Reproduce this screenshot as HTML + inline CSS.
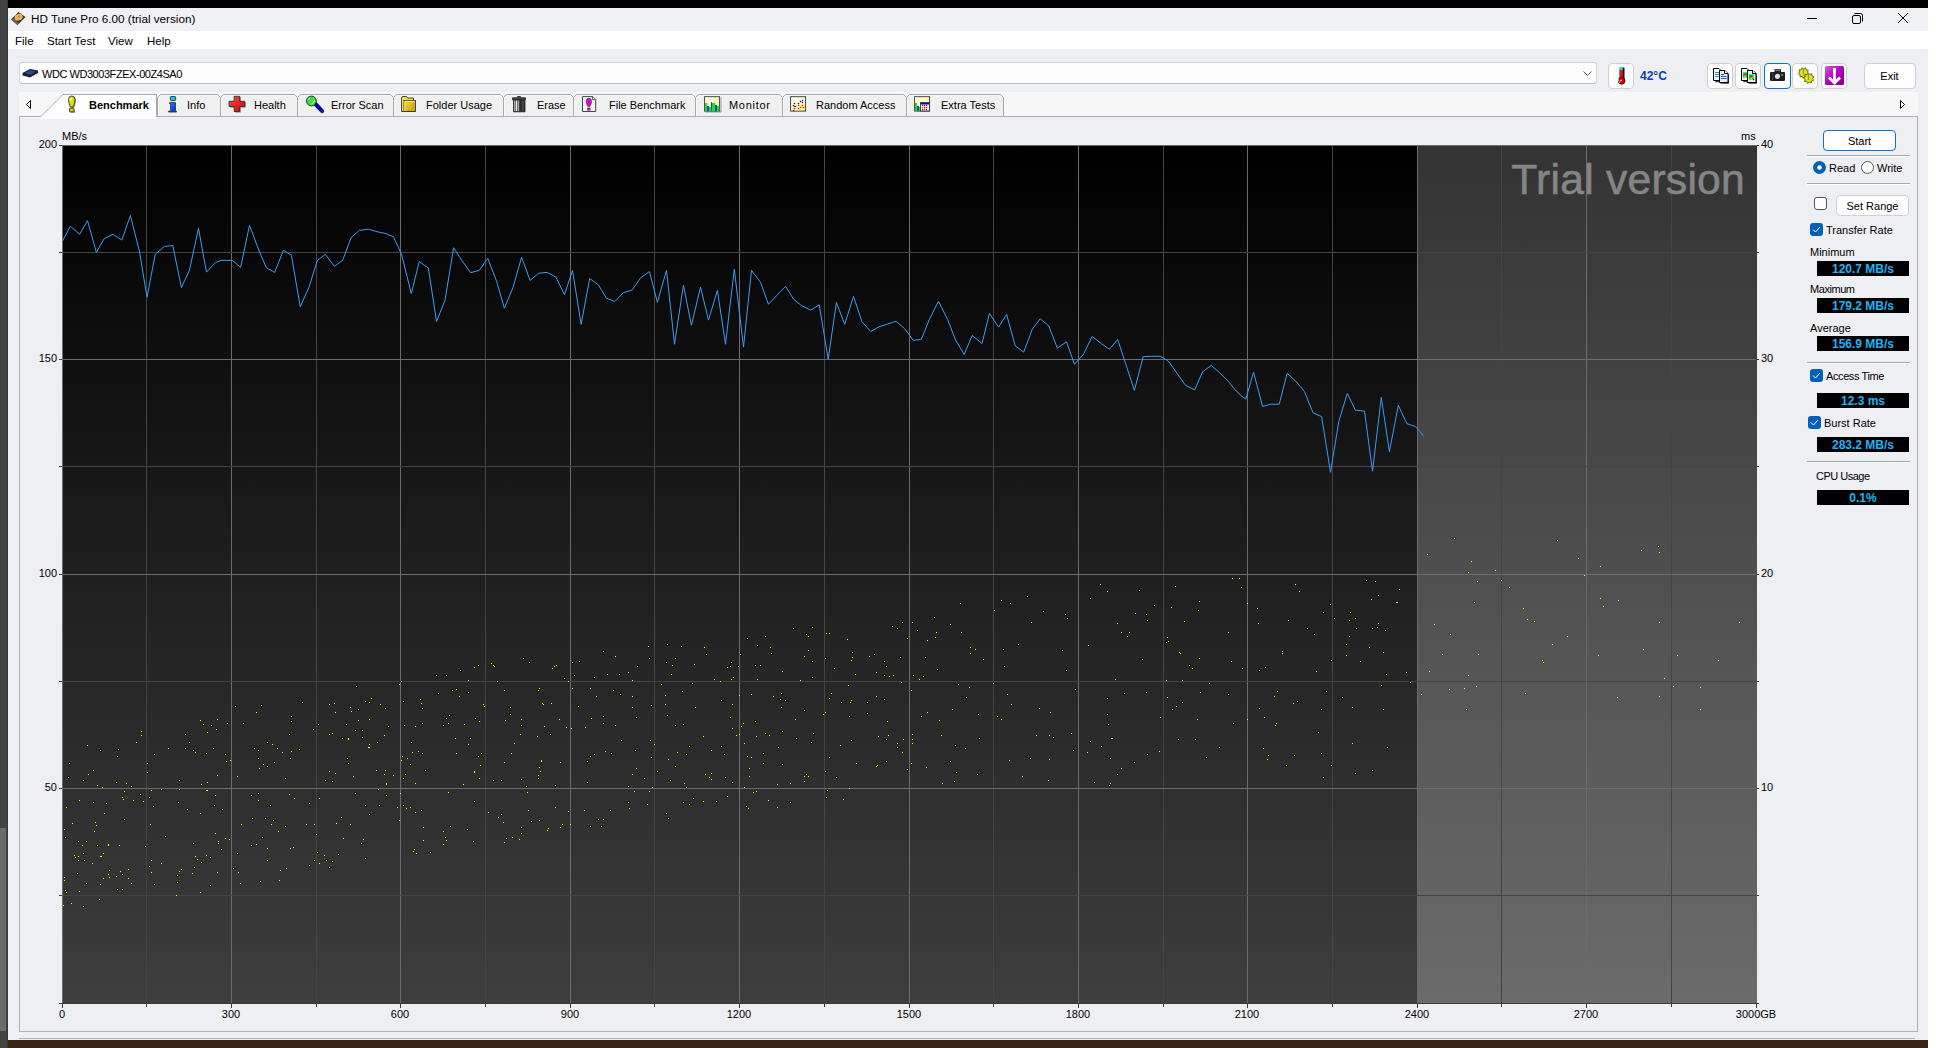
<!DOCTYPE html>
<html><head><meta charset="utf-8"><title>HD Tune Pro 6.00</title>
<style>
html,body{margin:0;padding:0;width:1936px;height:1048px;overflow:hidden;background:#fff;position:relative;font-family:"Liberation Sans",sans-serif;color:#000}
.a{position:absolute;box-sizing:border-box}
.t{position:absolute;font-size:11px;line-height:14px;white-space:nowrap}
.btn{position:absolute;box-sizing:border-box;background:#fdfdfd;border:1px solid #d0d0d0;border-radius:4px}
.tab{position:absolute;box-sizing:border-box;top:94px;height:22px;background:#f0f0f0;border:1px solid #a9a9a9;border-bottom:none;border-radius:3px 3px 0 0}
.tab .t{top:3px}
.tab svg{position:absolute;top:2px}
.vbox{position:absolute;left:1817px;width:92px;height:15px;background:#000;color:#1eb4f5;font-weight:bold;font-size:12px;line-height:16px;text-align:center}
.sep{position:absolute;left:1807px;width:103px;height:1px;background:#a8a8a8;border-bottom:1px solid #fff}
.chk{position:absolute;box-sizing:border-box;width:13px;height:13px;border-radius:3px;background:#005fb8}
</style></head>
<body>
<!-- screen strips -->
<div class="a" style="left:0;top:0;width:8px;height:1048px;background:#424242"></div>
<div class="a" style="left:7px;top:0;width:1px;height:1048px;background:#383838"></div>
<div class="a" style="left:0;top:828px;width:6px;height:203px;background:#6a6a6a"></div>
<div class="a" style="left:8px;top:0;width:1920px;height:8px;background:#000"></div>
<div class="a" style="left:8px;top:1040px;width:1920px;height:8px;background:#3a2418"></div>

<!-- window -->
<div class="a" style="left:8px;top:8px;width:1920px;height:23px;background:#f0f1f5"></div>
<div class="a" style="left:8px;top:31px;width:1920px;height:18px;background:#fff"></div>
<div class="a" style="left:8px;top:49px;width:1920px;height:991px;background:#eeeff2"></div>

<!-- title -->

<div class="t" style="left:31px;top:12px;font-size:11.7px;line-height:14px">HD Tune Pro 6.00 (trial version)</div>
<svg class="a" style="left:1800px;top:10px" width="120" height="18">
 <line x1="7" y1="8.5" x2="17" y2="8.5" stroke="#000" stroke-width="1"/>
 <rect x="52.5" y="5.5" width="8" height="8" rx="1.5" fill="none" stroke="#000"/>
 <path d="M54.5 3.5 H60.5 Q62.5 3.5 62.5 5.5 V11.5" fill="none" stroke="#000"/>
 <path d="M98 3 L108 13 M108 3 L98 13" stroke="#000" stroke-width="1"/>
</svg>

<!-- menu -->
<div class="t" style="left:15px;top:34px;font-size:11.5px">File</div>
<div class="t" style="left:47px;top:34px;font-size:11.5px">Start Test</div>
<div class="t" style="left:108px;top:34px;font-size:11.5px">View</div>
<div class="t" style="left:147px;top:34px;font-size:11.5px">Help</div>

<!-- drive combo -->
<div class="a" style="left:19px;top:62px;width:1578px;height:22px;background:#fcfcfc;border:1px solid #d3d3d3;border-bottom-color:#bdbdbd;border-radius:3px"></div>

<div class="t" style="left:42px;top:67px;letter-spacing:-0.45px">WDC WD3003FZEX-00Z4SA0</div>
<svg class="a" style="left:1582px;top:70px" width="12" height="8"><path d="M1.5 1.5 L5.5 5.5 L9.5 1.5" fill="none" stroke="#555" stroke-width="1"/></svg>

<!-- thermometer button -->
<div class="btn" style="left:1608px;top:63px;width:26px;height:26px"></div>

<div class="t" style="left:1640px;top:69px;font-weight:bold;color:#0d3cc0;font-size:12px">42°C</div>

<!-- tool buttons -->
<div class="btn" style="left:1707px;top:63px;width:26px;height:26px"></div>
<div class="btn" style="left:1735px;top:63px;width:26px;height:26px"></div>
<div class="btn" style="left:1764px;top:63px;width:27px;height:26px;border:1px solid #0a74d0"></div>
<div class="btn" style="left:1792px;top:63px;width:26px;height:26px"></div>
<div class="btn" style="left:1821px;top:63px;width:26px;height:26px"></div>
<div class="btn" style="left:1864px;top:63px;width:52px;height:26px"></div>
<div class="t" style="left:1864px;top:69px;width:51px;text-align:center">Exit</div>

<!-- tab strip -->
<div class="a" style="left:19px;top:92px;width:1899px;height:25px;background:#f7f7f7"></div>
<div class="a" style="left:19px;top:116px;width:1899px;height:1px;background:#b0b0b0"></div>
<svg class="a" style="left:24px;top:99px" width="10" height="12"><path d="M2.5 5.5 L6.5 1.5 V9.5 Z" fill="none" stroke="#000" stroke-width="1"/></svg>
<svg class="a" style="left:1897px;top:99px" width="10" height="12"><path d="M7.5 5.5 L3.5 1.5 V9.5 Z" fill="none" stroke="#000" stroke-width="1"/></svg>

<!-- tabs -->
<svg class="a" style="left:0;top:0" width="1100" height="120"><path d="M157.5 116 V97.5 L160.5 94.5 H217.5 L220.5 97.5 V116 Z" fill="#f0f0f0"/><path d="M157.5 116 V97.5 L160.5 94.5 H217.5 L220.5 97.5 V116" fill="none" stroke="#a9a9a9"/><path d="M158.5 116 V98 L161.0 95.5 H217.0 L219.5 98" fill="none" stroke="#fafafa" stroke-width="0.8"/><path d="M220.5 116 V97.5 L223.5 94.5 H294.5 L297.5 97.5 V116 Z" fill="#f0f0f0"/><path d="M220.5 116 V97.5 L223.5 94.5 H294.5 L297.5 97.5 V116" fill="none" stroke="#a9a9a9"/><path d="M221.5 116 V98 L224.0 95.5 H294.0 L296.5 98" fill="none" stroke="#fafafa" stroke-width="0.8"/><path d="M297.5 116 V97.5 L300.5 94.5 H390.5 L393.5 97.5 V116 Z" fill="#f0f0f0"/><path d="M297.5 116 V97.5 L300.5 94.5 H390.5 L393.5 97.5 V116" fill="none" stroke="#a9a9a9"/><path d="M298.5 116 V98 L301.0 95.5 H390.0 L392.5 98" fill="none" stroke="#fafafa" stroke-width="0.8"/><path d="M393.5 116 V97.5 L396.5 94.5 H500.5 L503.5 97.5 V116 Z" fill="#f0f0f0"/><path d="M393.5 116 V97.5 L396.5 94.5 H500.5 L503.5 97.5 V116" fill="none" stroke="#a9a9a9"/><path d="M394.5 116 V98 L397.0 95.5 H500.0 L502.5 98" fill="none" stroke="#fafafa" stroke-width="0.8"/><path d="M503.5 116 V97.5 L506.5 94.5 H570.5 L573.5 97.5 V116 Z" fill="#f0f0f0"/><path d="M503.5 116 V97.5 L506.5 94.5 H570.5 L573.5 97.5 V116" fill="none" stroke="#a9a9a9"/><path d="M504.5 116 V98 L507.0 95.5 H570.0 L572.5 98" fill="none" stroke="#fafafa" stroke-width="0.8"/><path d="M573.5 116 V97.5 L576.5 94.5 H692.5 L695.5 97.5 V116 Z" fill="#f0f0f0"/><path d="M573.5 116 V97.5 L576.5 94.5 H692.5 L695.5 97.5 V116" fill="none" stroke="#a9a9a9"/><path d="M574.5 116 V98 L577.0 95.5 H692.0 L694.5 98" fill="none" stroke="#fafafa" stroke-width="0.8"/><path d="M695.5 116 V97.5 L698.5 94.5 H779.5 L782.5 97.5 V116 Z" fill="#f0f0f0"/><path d="M695.5 116 V97.5 L698.5 94.5 H779.5 L782.5 97.5 V116" fill="none" stroke="#a9a9a9"/><path d="M696.5 116 V98 L699.0 95.5 H779.0 L781.5 98" fill="none" stroke="#fafafa" stroke-width="0.8"/><path d="M782.5 116 V97.5 L785.5 94.5 H903.5 L906.5 97.5 V116 Z" fill="#f0f0f0"/><path d="M782.5 116 V97.5 L785.5 94.5 H903.5 L906.5 97.5 V116" fill="none" stroke="#a9a9a9"/><path d="M783.5 116 V98 L786.0 95.5 H903.0 L905.5 98" fill="none" stroke="#fafafa" stroke-width="0.8"/><path d="M906.5 116 V97.5 L909.5 94.5 H1000.5 L1003.5 97.5 V116 Z" fill="#f0f0f0"/><path d="M906.5 116 V97.5 L909.5 94.5 H1000.5 L1003.5 97.5 V116" fill="none" stroke="#a9a9a9"/><path d="M907.5 116 V98 L910.0 95.5 H1000.0 L1002.5 98" fill="none" stroke="#fafafa" stroke-width="0.8"/></svg>
<div class="t" style="left:187px;top:98px">Info</div>
<div class="t" style="left:254px;top:98px">Health</div>
<div class="t" style="left:331px;top:98px">Error Scan</div>
<div class="t" style="left:426px;top:98px">Folder Usage</div>
<div class="t" style="left:537px;top:98px">Erase</div>
<div class="t" style="left:609px;top:98px">File Benchmark</div>
<div class="t" style="left:729px;top:98px;letter-spacing:0.7px">Monitor</div>
<div class="t" style="left:816px;top:98px">Random Access</div>
<div class="t" style="left:941px;top:98px">Extra Tests</div>

<!-- active tab (Benchmark) -->
<svg class="a" style="left:19px;top:93px" width="140" height="26">
 <path d="M21.5 23.5 L43.5 1.5 H137.5 V25 H21.5 Z" fill="#fff"/>
 <path d="M0 23.5 H22 L44 1.5 H137.5 V24" fill="none" stroke="#a9a9a9" stroke-width="1"/>
 <rect x="22" y="24" width="115" height="2" fill="#fff"/>
</svg>

<div class="t" style="left:89px;top:98px;font-weight:bold">Benchmark</div>

<!-- panel -->
<div class="a" style="left:19px;top:116px;width:1899px;height:916px;border:1px solid #b0b0b0;border-top:none"></div>
<div class="a" style="left:20px;top:117px;width:137px;height:1px;background:#fff"></div>
<div class="a" style="left:19px;top:1038px;width:1896px;height:1px;background:#b0b0b0"></div>

<svg width="1936" height="130" style="position:absolute;left:0;top:0">
<defs>
 <linearGradient id="gi" x1="0" y1="0" x2="1" y2="1"><stop offset="0" stop-color="#00a8ff"/><stop offset="1" stop-color="#0010ff"/></linearGradient>
 <linearGradient id="gr" x1="0" y1="0" x2="1" y2="1"><stop offset="0" stop-color="#ff4a4a"/><stop offset="1" stop-color="#e00000"/></linearGradient>
 <linearGradient id="gf" x1="0" y1="0" x2="1" y2="1"><stop offset="0" stop-color="#eed840"/><stop offset="1" stop-color="#d89a00"/></linearGradient>
 <linearGradient id="gy" x1="0" y1="0" x2="1" y2="1"><stop offset="0" stop-color="#ffffff"/><stop offset="1" stop-color="#fff880"/></linearGradient>
 <linearGradient id="gp" x1="0" y1="0" x2="1" y2="1"><stop offset="0" stop-color="#d860d8"/><stop offset="0.5" stop-color="#b000b8"/><stop offset="1" stop-color="#800088"/></linearGradient>
</defs>
<!-- title icon -->
<path d="M11 19.5 L18.5 12 L25.5 17 L17.5 25 Z" fill="#333"/>
<path d="M11.5 19.5 L17.5 25 L19 23.5 L13.5 18 Z" fill="#666"/>
<ellipse cx="18.6" cy="17.2" rx="4.2" ry="3.2" fill="#f0b050" transform="rotate(-20 18.6 17.2)"/>
<circle cx="19" cy="16.6" r="1.1" fill="#999"/>
<!-- drive icon -->
<path d="M22.5 73 L30 69 L38 70.5 L38 73 L30 77.5 L22.5 75.5 Z" fill="#15203a"/>
<path d="M24.5 73 L30 70.5 L36 71.5 L30 75 Z" fill="#2a4c88"/>
<!-- benchmark -->
<g transform="translate(1,1)" opacity="0.45"><path d="M68.5 99.5 Q68.5 96 71.8 96 Q75 96 75 99.5 Q75 103 73.2 107 H70.3 Q68.5 103 68.5 99.5 Z M69.5 108.5 H74 V112 H69.5 Z" fill="#222"/></g>
<path d="M68.5 99.5 Q68.5 96 71.8 96 Q75 96 75 99.5 Q75 103 73.2 107 H70.3 Q68.5 103 68.5 99.5 Z" fill="#e0e000" stroke="#333" stroke-width="0.9"/>
<rect x="69.5" y="108.2" width="4.5" height="3.6" rx="0.8" fill="#d8d800" stroke="#333" stroke-width="0.9"/>
<ellipse cx="70.7" cy="99" rx="1.1" ry="1.6" fill="#ffffc0"/>
<!-- info -->
<rect x="170.4" y="96.5" width="5.2" height="4" rx="0.8" fill="#00c8ff" stroke="#3a2a20" stroke-width="0.9"/>
<path d="M169.6 102.6 H175.4 V111.2 H176.4 V112 H168.4 V111.2 H170.6 V103.8 H169.6 Z" fill="url(#gi)" stroke="#3a3020" stroke-width="0.9"/>
<!-- health -->
<path d="M235.2 97.3 H240.7 V102.3 H245.7 V107.4 H240.7 V112.5 H235.2 V107.4 H230.1 V102.3 H235.2 Z" fill="#333" opacity="0.6"/>
<path d="M234.2 96.3 H239.7 V101.3 H244.7 V106.4 H239.7 V111.5 H234.2 V106.4 H229.1 V101.3 H234.2 Z" fill="url(#gr)" stroke="#233" stroke-width="0.9"/>
<!-- error scan -->
<path d="M315.5 104 L321.5 110.5" stroke="#333" stroke-width="4.2" stroke-linecap="round" transform="translate(0.6,0.6)"/>
<path d="M315 103.5 L321 110" stroke="#0000c8" stroke-width="3.4" stroke-linecap="round"/>
<circle cx="311.4" cy="101" r="4.9" fill="#40e040" stroke="#2a1a2a" stroke-width="0.9"/>
<path d="M308.5 99.5 L310 98" stroke="#fff" stroke-width="1"/>
<path d="M311.5 104 Q314 103 314.5 100.5" stroke="#d0ffd0" stroke-width="1" fill="none"/>
<!-- folder -->
<path d="M401.5 98 L402.5 96.5 H406.5 L407.5 98 H413.5 V111.5 H401.5 Z" fill="#f0e040" stroke="#333" stroke-width="0.9"/>
<rect x="404" y="100.5" width="11.5" height="11" fill="url(#gf)" stroke="#333" stroke-width="0.9"/>
<path d="M404.8 101.5 V111 M404.8 101.3 H414.5" stroke="#ffffb0" stroke-width="0.8"/>
<path d="M413.3 101.5 V111" stroke="#999" stroke-width="0.6"/>
<!-- erase -->
<path d="M512.5 97.8 H517.5 V96.5 H520.5 V97.8 H525.5 V99.8 H512.5 Z" fill="#444" stroke="#222" stroke-width="0.8"/>
<path d="M513.5 99.8 H525 V111.8 H513.5 Z" fill="#2e2e2e" stroke="#222" stroke-width="0.8"/>
<path d="M514.8 100.5 V111 M518.3 100.5 V111" stroke="#a8a8a8" stroke-width="1.6"/>
<path d="M516.5 100.5 V111" stroke="#fff" stroke-width="0.9"/>
<path d="M523 100.5 V111" stroke="#5a5a5a" stroke-width="1"/>
<!-- file benchmark -->
<path d="M582.5 96.6 H592.8 L595.7 99.5 V111.5 H582.5 Z" fill="#f4f4f4" stroke="#333" stroke-width="0.9"/>
<path d="M592.5 96.8 V99.8 H595.5" fill="#fff" stroke="#333" stroke-width="0.8"/>
<path d="M588.9 98.2 Q591.5 98.2 591.5 101.5 Q591.5 104.5 589.6 106.8 H588.2 Q586.3 104.5 586.3 101.5 Q586.3 98.2 588.9 98.2 Z" fill="#e000e0" stroke="#1a2a1a" stroke-width="0.6"/>
<rect x="587.6" y="108" width="2.6" height="2.2" fill="#e000e0" stroke="#4a4a00" stroke-width="0.5"/>
<!-- monitor -->
<rect x="704.6" y="96.7" width="15" height="14.4" fill="url(#gy)" stroke="#333" stroke-width="0.9"/>
<path d="M705 103 H707 V111 H705 Z M709 107 H711 V111 H709 Z M712 103 H715 V111 H712 Z M717 106 H719.2 V111 H717 Z" fill="#00f000"/>
<path d="M707 106 H709 V111 H707 Z M711 102 H712 V111 H711 Z M715 105 H717 V111 H715 Z" fill="#3030ff"/>
<path d="M705.5 112 H721 V97.5" fill="none" stroke="#555" stroke-width="0.9" opacity="0.6"/>
<!-- random access -->
<rect x="790.6" y="96.7" width="15" height="14.4" fill="url(#gy)" stroke="#333" stroke-width="0.9"/>
<g fill="#0010f0"><circle cx="793.5" cy="105.5" r="0.8"/><circle cx="794.5" cy="103.5" r="0.8"/><circle cx="795.5" cy="106.5" r="0.8"/><circle cx="798.5" cy="103.5" r="0.8"/><circle cx="800.5" cy="101.5" r="0.8"/><circle cx="802.5" cy="100.5" r="0.8"/><circle cx="802.5" cy="102.5" r="0.8"/></g>
<g fill="#f00000"><circle cx="794.5" cy="106.5" r="0.8"/><circle cx="794.5" cy="108.5" r="0.8"/><circle cx="793.5" cy="110.5" r="0.8"/><circle cx="798.5" cy="105.5" r="0.8"/><circle cx="798.5" cy="108.5" r="0.8"/><circle cx="800.5" cy="107.5" r="0.8"/><circle cx="802.5" cy="105.5" r="0.8"/><circle cx="803.5" cy="107.5" r="0.8"/></g>
<!-- extra tests -->
<rect x="914.6" y="96.7" width="15" height="14.4" fill="url(#gy)" stroke="#333" stroke-width="0.9"/>
<path d="M915 103 H917 V111 H915 Z M919 107 H920 V111 H919 Z" fill="#00f000"/>
<path d="M917 106 H919 V111 H917 Z" fill="#3030ff"/>
<rect x="920.5" y="102.5" width="9" height="8.5" fill="#f4f4f4" stroke="#333" stroke-width="0.9"/>
<rect x="921" y="103" width="8" height="1.5" fill="#0000e0"/>
<g fill="#f00000"><circle cx="922.5" cy="105.5" r="0.7"/><circle cx="926.5" cy="105.5" r="0.7"/><circle cx="924.5" cy="107.5" r="0.7"/><circle cx="926.5" cy="107.5" r="0.7"/><circle cx="922.5" cy="109.5" r="0.7"/><circle cx="924.5" cy="109.5" r="0.7"/></g>
<g><circle cx="924.5" cy="105.5" r="0.7" fill="#0000e0"/><circle cx="926.5" cy="109.5" r="0.7" fill="#0000e0"/><circle cx="922.5" cy="107.5" r="0.7" fill="#00b000"/></g>
<!-- thermometer -->
<rect x="1619.5" y="67.5" width="5" height="13" fill="#111"/>
<rect x="1619.5" y="67.5" width="3.2" height="3" fill="#40d8f0"/>
<rect x="1620" y="70.5" width="2.8" height="10" fill="#e81010"/>
<circle cx="1621.6" cy="80.8" r="3.4" fill="#e00000" stroke="#200" stroke-width="0.8"/>
<path d="M1618.6 79 Q1618.2 81.5 1619.8 83" stroke="#70e0f0" stroke-width="1" fill="none"/>
<circle cx="1621" cy="80.5" r="0.8" fill="#fff"/>
<!-- copy icon 1 -->
<path d="M1714.5 69.5 H1720 L1721.5 71 V81.5 H1714.5 Z" fill="#444" transform="translate(0.8,0.8)"/>
<path d="M1713.5 68.5 H1719 L1720.5 70 V80.5 H1713.5 Z" fill="#fff" stroke="#000"/>
<path d="M1715 72.5 H1719 M1715 74.5 H1719.5 M1715 76.5 H1719.5" stroke="#1a90ff"/>
<path d="M1720.5 71.5 H1726 L1729 74.5 V83.8 H1720.5 Z" fill="#333"/>
<path d="M1719.5 70.5 H1725 L1728 73.5 V82.5 H1719.5 Z" fill="#ececec" stroke="#000"/>
<path d="M1724.5 70.5 V73.5 H1728" fill="#fff" stroke="#000"/>
<path d="M1721 74.5 H1724 M1721 76.5 H1726.5 M1721 78.5 H1726.5" stroke="#0a60ff"/>
<!-- copy icon 2 -->
<path d="M1742.5 69.5 H1748 L1749.5 71 V81.5 H1742.5 Z" fill="#444" transform="translate(0.8,0.8)"/>
<path d="M1741.5 68.5 H1747 L1748.5 70 V80.5 H1741.5 Z" fill="#fff" stroke="#000"/>
<rect x="1743" y="72" width="4.5" height="5.5" fill="#00d000"/><rect x="1743" y="72" width="4.5" height="1" fill="#30d8ff"/><circle cx="1745.3" cy="74.6" r="0.9" fill="#f00"/><rect x="1744.5" y="75.5" width="1.5" height="1.5" fill="#e8e800"/>
<path d="M1748.5 71.5 H1754 L1757 74.5 V83.8 H1748.5 Z" fill="#333"/>
<path d="M1747.5 70.5 H1753 L1756 73.5 V82.5 H1747.5 Z" fill="#ececec" stroke="#000"/>
<path d="M1752.5 70.5 V73.5 H1756" fill="#fff" stroke="#000"/>
<rect x="1749" y="74" width="4.5" height="5.5" fill="#00d000"/><rect x="1749" y="74" width="4.5" height="1" fill="#30d8ff"/><circle cx="1751.3" cy="76.6" r="0.9" fill="#f00"/><rect x="1750.5" y="77.5" width="1.5" height="1.5" fill="#e8e800"/><circle cx="1753.6" cy="79.6" r="0.7" fill="#000"/>
<!-- camera -->
<path d="M1774.5 72 V70 Q1774.5 69 1775.5 69 H1780 Q1781 69 1781 70 V72 H1784 Q1785 72 1785 73 V80 Q1785 81 1784 81 H1771 Q1770 81 1770 80 V73 Q1770 72 1771 72 Z" fill="#1e1e1e"/>
<path d="M1775.5 70.2 H1780" stroke="#ccc" stroke-width="0.8"/>
<circle cx="1777.5" cy="76.3" r="2.6" fill="#e0e0e0"/>
<rect x="1781.3" y="74" width="1.8" height="1.8" fill="#10e010"/>
<path d="M1772.5 73 V80.5" stroke="#555" stroke-width="0.6"/>
<!-- gears -->
<polygon points="1808.89,73.87 1806.93,74.84 1806.96,77.02 1804.84,76.50 1803.46,78.20 1802.17,76.43 1800.02,76.85 1800.17,74.66 1798.26,73.60 1799.78,72.03 1798.99,69.98 1801.17,69.75 1801.88,67.68 1803.70,68.90 1805.58,67.77 1806.18,69.88 1808.34,70.22 1807.46,72.22" fill="#e4e400" stroke="#505000" stroke-width="0.8"/>
<polygon points="1813.77,80.30 1811.66,80.86 1811.26,83.01 1809.28,82.07 1807.59,83.46 1806.68,81.47 1804.49,81.46 1805.07,79.35 1803.41,77.93 1805.21,76.68 1804.85,74.52 1807.02,74.73 1808.13,72.84 1809.67,74.40 1811.73,73.67 1811.91,75.85 1813.96,76.61 1812.69,78.40" fill="#e4e400" stroke="#505000" stroke-width="0.8"/>
<path d="M1803.5 68.5 V74.5 M1808.5 74 V80" stroke="#8a8aa8" stroke-width="1.3"/>
<!-- download -->
<rect x="1825" y="66" width="19" height="19" rx="1.5" fill="url(#gp)"/>
<path d="M1834.5 68 V81" stroke="#fff" stroke-width="2.8"/>
<path d="M1829 77.5 L1834.5 83 L1840 77.5" stroke="#fff" stroke-width="2.8" fill="none"/>
</svg>

<svg width="1936" height="1048" style="position:absolute;left:0;top:0">
<defs><linearGradient id="bg" x1="0" y1="0" x2="0" y2="1"><stop offset="0" stop-color="#000"/><stop offset="1" stop-color="#3e3e3e"/></linearGradient><linearGradient id="ug" x1="0" y1="0" x2="0" y2="1"><stop offset="0" stop-color="#333333"/><stop offset="1" stop-color="#6b6b6b"/></linearGradient></defs>
<rect x="62" y="145" width="1695" height="858" fill="url(#bg)"/>
<rect x="1417" y="145" width="340" height="858" fill="url(#ug)"/>
<g shape-rendering="crispEdges" stroke-width="1">
<line x1="146.5" y1="145" x2="146.5" y2="1003" stroke="#444"/>
<line x1="231.5" y1="145" x2="231.5" y2="1003" stroke="#6b6b6b"/>
<line x1="316.5" y1="145" x2="316.5" y2="1003" stroke="#444"/>
<line x1="400.5" y1="145" x2="400.5" y2="1003" stroke="#6b6b6b"/>
<line x1="485.5" y1="145" x2="485.5" y2="1003" stroke="#444"/>
<line x1="570.5" y1="145" x2="570.5" y2="1003" stroke="#6b6b6b"/>
<line x1="654.5" y1="145" x2="654.5" y2="1003" stroke="#444"/>
<line x1="739.5" y1="145" x2="739.5" y2="1003" stroke="#6b6b6b"/>
<line x1="824.5" y1="145" x2="824.5" y2="1003" stroke="#444"/>
<line x1="909.5" y1="145" x2="909.5" y2="1003" stroke="#6b6b6b"/>
<line x1="993.5" y1="145" x2="993.5" y2="1003" stroke="#444"/>
<line x1="1078.5" y1="145" x2="1078.5" y2="1003" stroke="#6b6b6b"/>
<line x1="1163.5" y1="145" x2="1163.5" y2="1003" stroke="#444"/>
<line x1="1247.5" y1="145" x2="1247.5" y2="1003" stroke="#6b6b6b"/>
<line x1="1332.5" y1="145" x2="1332.5" y2="1003" stroke="#444"/>
<line x1="1417.5" y1="145" x2="1417.5" y2="1003" stroke="#6b6b6b"/>
<line x1="1501.5" y1="145" x2="1501.5" y2="1003" stroke="#444"/>
<line x1="1586.5" y1="145" x2="1586.5" y2="1003" stroke="#6b6b6b"/>
<line x1="1671.5" y1="145" x2="1671.5" y2="1003" stroke="#444"/>
<line x1="62" y1="252.5" x2="1756" y2="252.5" stroke="#444"/>
<line x1="62" y1="359.5" x2="1756" y2="359.5" stroke="#6b6b6b"/>
<line x1="62" y1="466.5" x2="1756" y2="466.5" stroke="#444"/>
<line x1="62" y1="574.5" x2="1756" y2="574.5" stroke="#6b6b6b"/>
<line x1="62" y1="681.5" x2="1756" y2="681.5" stroke="#444"/>
<line x1="62" y1="788.5" x2="1756" y2="788.5" stroke="#6b6b6b"/>
<line x1="62" y1="895.5" x2="1756" y2="895.5" stroke="#444"/>
<line x1="62" y1="145.5" x2="1757" y2="145.5" stroke="#6b6b6b"/>
<line x1="62.5" y1="145" x2="62.5" y2="1003" stroke="#6b6b6b"/>
<line x1="59" y1="1003.5" x2="1759" y2="1003.5" stroke="#3a3a3a"/>
<line x1="59" y1="145.5" x2="62" y2="145.5" stroke="#3a3a3a"/>
<line x1="1757" y1="145.5" x2="1759" y2="145.5" stroke="#3a3a3a"/>
<line x1="59" y1="252.5" x2="62" y2="252.5" stroke="#3a3a3a"/>
<line x1="1757" y1="252.5" x2="1759" y2="252.5" stroke="#3a3a3a"/>
<line x1="59" y1="359.5" x2="62" y2="359.5" stroke="#3a3a3a"/>
<line x1="1757" y1="359.5" x2="1759" y2="359.5" stroke="#3a3a3a"/>
<line x1="59" y1="466.5" x2="62" y2="466.5" stroke="#3a3a3a"/>
<line x1="1757" y1="466.5" x2="1759" y2="466.5" stroke="#3a3a3a"/>
<line x1="59" y1="574.5" x2="62" y2="574.5" stroke="#3a3a3a"/>
<line x1="1757" y1="574.5" x2="1759" y2="574.5" stroke="#3a3a3a"/>
<line x1="59" y1="681.5" x2="62" y2="681.5" stroke="#3a3a3a"/>
<line x1="1757" y1="681.5" x2="1759" y2="681.5" stroke="#3a3a3a"/>
<line x1="59" y1="788.5" x2="62" y2="788.5" stroke="#3a3a3a"/>
<line x1="1757" y1="788.5" x2="1759" y2="788.5" stroke="#3a3a3a"/>
<line x1="59" y1="895.5" x2="62" y2="895.5" stroke="#3a3a3a"/>
<line x1="1757" y1="895.5" x2="1759" y2="895.5" stroke="#3a3a3a"/>
<line x1="62.5" y1="1003" x2="62.5" y2="1008" stroke="#3a3a3a"/>
<line x1="146.5" y1="1003" x2="146.5" y2="1007" stroke="#3a3a3a"/>
<line x1="231.5" y1="1003" x2="231.5" y2="1008" stroke="#3a3a3a"/>
<line x1="316.5" y1="1003" x2="316.5" y2="1007" stroke="#3a3a3a"/>
<line x1="400.5" y1="1003" x2="400.5" y2="1008" stroke="#3a3a3a"/>
<line x1="485.5" y1="1003" x2="485.5" y2="1007" stroke="#3a3a3a"/>
<line x1="570.5" y1="1003" x2="570.5" y2="1008" stroke="#3a3a3a"/>
<line x1="654.5" y1="1003" x2="654.5" y2="1007" stroke="#3a3a3a"/>
<line x1="739.5" y1="1003" x2="739.5" y2="1008" stroke="#3a3a3a"/>
<line x1="824.5" y1="1003" x2="824.5" y2="1007" stroke="#3a3a3a"/>
<line x1="909.5" y1="1003" x2="909.5" y2="1008" stroke="#3a3a3a"/>
<line x1="993.5" y1="1003" x2="993.5" y2="1007" stroke="#3a3a3a"/>
<line x1="1078.5" y1="1003" x2="1078.5" y2="1008" stroke="#3a3a3a"/>
<line x1="1163.5" y1="1003" x2="1163.5" y2="1007" stroke="#3a3a3a"/>
<line x1="1247.5" y1="1003" x2="1247.5" y2="1008" stroke="#3a3a3a"/>
<line x1="1332.5" y1="1003" x2="1332.5" y2="1007" stroke="#3a3a3a"/>
<line x1="1417.5" y1="1003" x2="1417.5" y2="1008" stroke="#3a3a3a"/>
<line x1="1501.5" y1="1003" x2="1501.5" y2="1007" stroke="#3a3a3a"/>
<line x1="1586.5" y1="1003" x2="1586.5" y2="1008" stroke="#3a3a3a"/>
<line x1="1671.5" y1="1003" x2="1671.5" y2="1007" stroke="#3a3a3a"/>
<line x1="1756.5" y1="1003" x2="1756.5" y2="1008" stroke="#3a3a3a"/>
</g>
<path d="M501 780h1v1h-1zM161 789h1v1h-1zM141 735h1v1h-1zM649 658h1v1h-1zM637 666h1v1h-1zM365 858h1v1h-1zM843 799h1v1h-1zM126 783h1v1h-1zM258 758h1v1h-1zM1167 697h1v1h-1zM927 712h1v1h-1zM147 763h1v1h-1zM983 659h1v1h-1zM855 674h1v1h-1zM393 775h1v1h-1zM452 690h1v1h-1zM628 672h1v1h-1zM724 754h1v1h-1zM1247 719h1v1h-1zM867 702h1v1h-1zM704 647h1v1h-1zM448 792h1v1h-1zM93 770h1v1h-1zM221 849h1v1h-1zM237 776h1v1h-1zM1242 668h1v1h-1zM806 774h1v1h-1zM1231 661h1v1h-1zM548 828h1v1h-1zM267 742h1v1h-1zM378 789h1v1h-1zM418 751h1v1h-1zM562 824h1v1h-1zM997 716h1v1h-1zM977 774h1v1h-1zM1142 659h1v1h-1zM203 724h1v1h-1zM154 754h1v1h-1zM523 658h1v1h-1zM267 766h1v1h-1zM97 845h1v1h-1zM263 764h1v1h-1zM555 807h1v1h-1zM1406 672h1v1h-1zM179 780h1v1h-1zM421 703h1v1h-1zM94 831h1v1h-1zM261 705h1v1h-1zM777 784h1v1h-1zM1004 666h1v1h-1zM289 794h1v1h-1zM1117 623h1v1h-1zM369 747h1v1h-1zM102 787h1v1h-1zM413 851h1v1h-1zM668 818h1v1h-1zM1355 618h1v1h-1zM369 719h1v1h-1zM907 769h1v1h-1zM711 779h1v1h-1zM177 882h1v1h-1zM709 777h1v1h-1zM512 837h1v1h-1zM598 819h1v1h-1zM1043 611h1v1h-1zM267 848h1v1h-1zM260 881h1v1h-1zM952 709h1v1h-1zM240 883h1v1h-1zM942 783h1v1h-1zM649 791h1v1h-1zM348 739h1v1h-1zM388 726h1v1h-1zM629 808h1v1h-1zM541 761h1v1h-1zM1286 765h1v1h-1zM741 726h1v1h-1zM88 774h1v1h-1zM68 777h1v1h-1zM703 736h1v1h-1zM504 762h1v1h-1zM1124 693h1v1h-1zM399 820h1v1h-1zM749 768h1v1h-1zM1297 701h1v1h-1zM747 756h1v1h-1zM675 725h1v1h-1zM414 849h1v1h-1zM1199 601h1v1h-1zM661 684h1v1h-1zM161 863h1v1h-1zM1276 723h1v1h-1zM956 772h1v1h-1zM1372 770h1v1h-1zM601 826h1v1h-1zM1189 665h1v1h-1zM760 665h1v1h-1zM493 665h1v1h-1zM812 627h1v1h-1zM511 753h1v1h-1zM149 866h1v1h-1zM1377 627h1v1h-1zM116 782h1v1h-1zM238 872h1v1h-1zM1171 607h1v1h-1zM1010 603h1v1h-1zM994 610h1v1h-1zM1147 754h1v1h-1zM153 806h1v1h-1zM521 827h1v1h-1zM425 770h1v1h-1zM385 708h1v1h-1zM131 786h1v1h-1zM475 718h1v1h-1zM739 695h1v1h-1zM87 745h1v1h-1zM319 863h1v1h-1zM206 790h1v1h-1zM732 704h1v1h-1zM748 808h1v1h-1zM526 786h1v1h-1zM923 676h1v1h-1zM136 742h1v1h-1zM1065 614h1v1h-1zM177 875h1v1h-1zM970 647h1v1h-1zM459 696h1v1h-1zM666 813h1v1h-1zM1378 623h1v1h-1zM1369 647h1v1h-1zM64 829h1v1h-1zM743 723h1v1h-1zM69 763h1v1h-1zM603 651h1v1h-1zM474 772h1v1h-1zM778 747h1v1h-1zM590 826h1v1h-1zM265 818h1v1h-1zM122 889h1v1h-1zM911 763h1v1h-1zM251 795h1v1h-1zM1001 600h1v1h-1zM243 723h1v1h-1zM912 739h1v1h-1zM725 777h1v1h-1zM1075 689h1v1h-1zM955 745h1v1h-1zM404 725h1v1h-1zM1049 735h1v1h-1zM1383 652h1v1h-1zM711 773h1v1h-1zM897 628h1v1h-1zM262 837h1v1h-1zM474 667h1v1h-1zM145 846h1v1h-1zM456 753h1v1h-1zM693 798h1v1h-1zM332 861h1v1h-1zM86 883h1v1h-1zM1372 628h1v1h-1zM346 724h1v1h-1zM849 716h1v1h-1zM1352 743h1v1h-1zM751 757h1v1h-1zM376 770h1v1h-1zM96 825h1v1h-1zM672 665h1v1h-1zM528 810h1v1h-1zM65 890h1v1h-1zM225 838h1v1h-1zM1282 651h1v1h-1zM594 754h1v1h-1zM551 703h1v1h-1zM128 878h1v1h-1zM449 715h1v1h-1zM422 708h1v1h-1zM568 811h1v1h-1zM806 634h1v1h-1zM1053 737h1v1h-1zM934 617h1v1h-1zM1316 671h1v1h-1zM527 792h1v1h-1zM1383 709h1v1h-1zM470 738h1v1h-1zM289 734h1v1h-1zM1288 620h1v1h-1zM671 674h1v1h-1zM185 734h1v1h-1zM386 784h1v1h-1zM621 740h1v1h-1zM572 662h1v1h-1zM438 693h1v1h-1zM744 787h1v1h-1zM355 730h1v1h-1zM603 819h1v1h-1zM92 863h1v1h-1zM1274 696h1v1h-1zM63 905h1v1h-1zM1378 595h1v1h-1zM271 824h1v1h-1zM681 646h1v1h-1zM1121 768h1v1h-1zM936 632h1v1h-1zM403 805h1v1h-1zM214 805h1v1h-1zM851 660h1v1h-1zM876 672h1v1h-1zM686 754h1v1h-1zM1258 623h1v1h-1zM397 807h1v1h-1zM478 756h1v1h-1zM975 649h1v1h-1zM369 744h1v1h-1zM632 680h1v1h-1zM746 806h1v1h-1zM484 706h1v1h-1zM362 737h1v1h-1zM1350 612h1v1h-1zM365 805h1v1h-1zM1346 655h1v1h-1zM351 711h1v1h-1zM133 800h1v1h-1zM1323 612h1v1h-1zM106 803h1v1h-1zM568 681h1v1h-1zM66 807h1v1h-1zM1355 773h1v1h-1zM343 838h1v1h-1zM1175 586h1v1h-1zM703 801h1v1h-1zM324 855h1v1h-1zM103 878h1v1h-1zM1100 584h1v1h-1zM147 772h1v1h-1zM521 833h1v1h-1zM897 747h1v1h-1zM491 663h1v1h-1zM95 822h1v1h-1zM585 727h1v1h-1zM730 666h1v1h-1zM884 675h1v1h-1zM552 668h1v1h-1zM329 734h1v1h-1zM150 824h1v1h-1zM503 822h1v1h-1zM1399 589h1v1h-1zM193 843h1v1h-1zM667 715h1v1h-1zM902 752h1v1h-1zM226 761h1v1h-1zM829 757h1v1h-1zM332 733h1v1h-1zM270 805h1v1h-1zM504 842h1v1h-1zM749 776h1v1h-1zM201 862h1v1h-1zM117 756h1v1h-1zM319 798h1v1h-1zM1321 753h1v1h-1zM670 780h1v1h-1zM1342 697h1v1h-1zM901 682h1v1h-1zM254 748h1v1h-1zM874 654h1v1h-1zM78 860h1v1h-1zM313 729h1v1h-1zM1139 590h1v1h-1zM200 813h1v1h-1zM927 640h1v1h-1zM1003 649h1v1h-1zM479 721h1v1h-1zM829 698h1v1h-1zM555 785h1v1h-1zM338 854h1v1h-1zM636 717h1v1h-1zM1257 608h1v1h-1zM83 853h1v1h-1zM1293 703h1v1h-1zM564 678h1v1h-1zM446 840h1v1h-1zM210 857h1v1h-1zM1371 599h1v1h-1zM716 801h1v1h-1zM587 761h1v1h-1zM1178 739h1v1h-1zM363 839h1v1h-1zM1184 621h1v1h-1zM603 716h1v1h-1zM229 839h1v1h-1zM1277 691h1v1h-1zM1087 752h1v1h-1zM222 809h1v1h-1zM911 690h1v1h-1zM851 740h1v1h-1zM667 644h1v1h-1zM900 657h1v1h-1zM683 724h1v1h-1zM207 790h1v1h-1zM187 809h1v1h-1zM118 749h1v1h-1zM755 721h1v1h-1zM574 675h1v1h-1zM325 780h1v1h-1zM286 868h1v1h-1zM151 860h1v1h-1zM277 748h1v1h-1zM1166 680h1v1h-1zM1307 628h1v1h-1zM747 638h1v1h-1zM309 865h1v1h-1zM291 716h1v1h-1zM781 693h1v1h-1zM847 639h1v1h-1zM596 696h1v1h-1zM550 734h1v1h-1zM302 702h1v1h-1zM1172 709h1v1h-1zM960 603h1v1h-1zM108 844h1v1h-1zM647 804h1v1h-1zM241 824h1v1h-1zM93 802h1v1h-1zM206 753h1v1h-1zM852 657h1v1h-1zM907 638h1v1h-1zM1330 604h1v1h-1zM192 873h1v1h-1zM1121 632h1v1h-1zM78 841h1v1h-1zM537 736h1v1h-1zM399 684h1v1h-1zM782 671h1v1h-1zM141 731h1v1h-1zM808 650h1v1h-1zM332 781h1v1h-1zM299 749h1v1h-1zM128 869h1v1h-1zM1030 758h1v1h-1zM1071 733h1v1h-1zM675 658h1v1h-1zM377 742h1v1h-1zM422 753h1v1h-1zM1129 632h1v1h-1zM356 686h1v1h-1zM415 812h1v1h-1zM505 720h1v1h-1zM386 795h1v1h-1zM1387 747h1v1h-1zM654 744h1v1h-1zM479 778h1v1h-1zM168 748h1v1h-1zM99 899h1v1h-1zM529 662h1v1h-1zM119 845h1v1h-1zM151 790h1v1h-1zM1268 755h1v1h-1zM207 732h1v1h-1zM109 877h1v1h-1zM917 630h1v1h-1zM195 752h1v1h-1zM494 666h1v1h-1zM410 807h1v1h-1zM560 827h1v1h-1zM744 743h1v1h-1zM104 813h1v1h-1zM1108 724h1v1h-1zM790 783h1v1h-1zM185 748h1v1h-1zM64 877h1v1h-1zM1386 674h1v1h-1zM727 667h1v1h-1zM732 782h1v1h-1zM415 726h1v1h-1zM353 776h1v1h-1zM211 725h1v1h-1zM544 726h1v1h-1zM1267 759h1v1h-1zM97 785h1v1h-1zM1282 653h1v1h-1zM1259 670h1v1h-1zM782 764h1v1h-1zM937 669h1v1h-1zM273 820h1v1h-1zM1066 670h1v1h-1zM233 868h1v1h-1zM384 735h1v1h-1zM272 744h1v1h-1zM504 690h1v1h-1zM506 838h1v1h-1zM1048 780h1v1h-1zM200 892h1v1h-1zM651 757h1v1h-1zM207 782h1v1h-1zM108 874h1v1h-1zM1001 719h1v1h-1zM689 746h1v1h-1zM610 810h1v1h-1zM644 778h1v1h-1zM632 774h1v1h-1zM677 752h1v1h-1zM195 856h1v1h-1zM401 760h1v1h-1zM903 739h1v1h-1zM1321 709h1v1h-1zM1115 679h1v1h-1zM1381 685h1v1h-1zM280 870h1v1h-1zM765 733h1v1h-1zM795 719h1v1h-1zM768 800h1v1h-1zM347 758h1v1h-1zM1094 782h1v1h-1zM543 704h1v1h-1zM603 723h1v1h-1zM632 707h1v1h-1zM421 810h1v1h-1zM1334 618h1v1h-1zM1147 620h1v1h-1zM237 853h1v1h-1zM921 716h1v1h-1zM368 747h1v1h-1zM1167 637h1v1h-1zM804 776h1v1h-1zM542 703h1v1h-1zM571 728h1v1h-1zM314 824h1v1h-1zM443 725h1v1h-1zM711 750h1v1h-1zM954 781h1v1h-1zM1219 747h1v1h-1zM252 818h1v1h-1zM83 906h1v1h-1zM950 624h1v1h-1zM256 844h1v1h-1zM531 821h1v1h-1zM1134 762h1v1h-1zM886 739h1v1h-1zM1197 719h1v1h-1zM781 707h1v1h-1zM420 699h1v1h-1zM730 717h1v1h-1zM258 793h1v1h-1zM793 628h1v1h-1zM1200 692h1v1h-1zM570 824h1v1h-1zM165 836h1v1h-1zM101 856h1v1h-1zM1323 777h1v1h-1zM753 792h1v1h-1zM108 845h1v1h-1zM521 725h1v1h-1zM705 774h1v1h-1zM348 763h1v1h-1zM812 677h1v1h-1zM1182 680h1v1h-1zM430 852h1v1h-1zM510 714h1v1h-1zM856 763h1v1h-1zM117 889h1v1h-1zM800 680h1v1h-1zM71 903h1v1h-1zM886 761h1v1h-1zM897 743h1v1h-1zM869 656h1v1h-1zM965 748h1v1h-1zM200 720h1v1h-1zM950 761h1v1h-1zM412 752h1v1h-1zM493 780h1v1h-1zM1326 691h1v1h-1zM116 876h1v1h-1zM841 702h1v1h-1zM82 845h1v1h-1zM706 654h1v1h-1zM935 637h1v1h-1zM84 860h1v1h-1zM227 723h1v1h-1zM1239 578h1v1h-1zM1036 735h1v1h-1zM316 834h1v1h-1zM1050 712h1v1h-1zM1022 776h1v1h-1zM406 808h1v1h-1zM78 856h1v1h-1zM1168 641h1v1h-1zM1049 759h1v1h-1zM721 700h1v1h-1zM840 745h1v1h-1zM259 768h1v1h-1zM628 786h1v1h-1zM829 633h1v1h-1zM1182 702h1v1h-1zM876 696h1v1h-1zM1264 717h1v1h-1zM877 765h1v1h-1zM446 718h1v1h-1zM634 791h1v1h-1zM1263 748h1v1h-1zM836 777h1v1h-1zM1299 591h1v1h-1zM812 661h1v1h-1zM379 805h1v1h-1zM692 683h1v1h-1zM684 783h1v1h-1zM1107 698h1v1h-1zM769 735h1v1h-1zM318 724h1v1h-1zM1011 704h1v1h-1zM607 674h1v1h-1zM123 799h1v1h-1zM206 855h1v1h-1zM274 762h1v1h-1zM765 636h1v1h-1zM720 681h1v1h-1zM1117 774h1v1h-1zM1366 580h1v1h-1zM334 703h1v1h-1zM131 883h1v1h-1zM683 802h1v1h-1zM149 797h1v1h-1zM225 754h1v1h-1zM826 797h1v1h-1zM969 687h1v1h-1zM279 880h1v1h-1zM362 730h1v1h-1zM539 820h1v1h-1zM1195 739h1v1h-1zM1396 602h1v1h-1zM978 714h1v1h-1zM1088 645h1v1h-1zM410 764h1v1h-1zM291 721h1v1h-1zM979 738h1v1h-1zM326 860h1v1h-1zM361 843h1v1h-1zM1265 667h1v1h-1zM194 867h1v1h-1zM913 675h1v1h-1zM1176 706h1v1h-1zM256 712h1v1h-1zM258 750h1v1h-1zM620 694h1v1h-1zM1198 610h1v1h-1zM727 796h1v1h-1zM217 719h1v1h-1zM348 738h1v1h-1zM411 742h1v1h-1zM1314 634h1v1h-1zM1275 725h1v1h-1zM460 670h1v1h-1zM1154 605h1v1h-1zM65 837h1v1h-1zM314 860h1v1h-1zM358 709h1v1h-1zM306 824h1v1h-1zM329 704h1v1h-1zM886 666h1v1h-1zM341 817h1v1h-1zM336 823h1v1h-1zM615 656h1v1h-1zM1159 751h1v1h-1zM1232 578h1v1h-1zM1294 755h1v1h-1zM423 827h1v1h-1zM559 719h1v1h-1zM867 713h1v1h-1zM666 662h1v1h-1zM1233 723h1v1h-1zM579 661h1v1h-1zM732 728h1v1h-1zM790 802h1v1h-1zM365 701h1v1h-1zM401 681h1v1h-1zM193 750h1v1h-1zM86 841h1v1h-1zM770 647h1v1h-1zM124 819h1v1h-1zM740 654h1v1h-1zM611 753h1v1h-1zM1228 694h1v1h-1zM1073 750h1v1h-1zM1331 660h1v1h-1zM1199 658h1v1h-1zM521 719h1v1h-1zM652 787h1v1h-1zM1209 683h1v1h-1zM400 793h1v1h-1zM556 665h1v1h-1zM648 646h1v1h-1zM251 845h1v1h-1zM1259 708h1v1h-1zM422 723h1v1h-1zM796 738h1v1h-1zM402 756h1v1h-1zM1349 636h1v1h-1zM939 720h1v1h-1zM1356 628h1v1h-1zM694 664h1v1h-1zM230 760h1v1h-1zM613 690h1v1h-1zM181 869h1v1h-1zM888 735h1v1h-1zM335 773h1v1h-1zM804 710h1v1h-1zM483 704h1v1h-1zM756 736h1v1h-1zM79 891h1v1h-1zM385 770h1v1h-1zM448 723h1v1h-1zM1107 591h1v1h-1zM1241 587h1v1h-1zM587 782h1v1h-1zM210 885h1v1h-1zM1062 650h1v1h-1zM539 767h1v1h-1zM763 763h1v1h-1zM1090 741h1v1h-1zM235 706h1v1h-1zM736 735h1v1h-1zM628 802h1v1h-1zM884 699h1v1h-1zM682 691h1v1h-1zM591 718h1v1h-1zM498 817h1v1h-1zM738 666h1v1h-1zM474 771h1v1h-1zM849 788h1v1h-1zM501 814h1v1h-1zM1360 661h1v1h-1zM1295 584h1v1h-1zM827 790h1v1h-1zM1109 785h1v1h-1zM763 753h1v1h-1zM590 756h1v1h-1zM538 778h1v1h-1zM773 696h1v1h-1zM605 751h1v1h-1zM721 746h1v1h-1zM1410 682h1v1h-1zM1166 642h1v1h-1zM756 791h1v1h-1zM632 696h1v1h-1zM755 665h1v1h-1zM309 803h1v1h-1zM540 771h1v1h-1zM120 871h1v1h-1zM478 665h1v1h-1zM474 772h1v1h-1zM966 697h1v1h-1zM811 742h1v1h-1zM782 731h1v1h-1zM619 674h1v1h-1zM1090 598h1v1h-1zM293 847h1v1h-1zM892 626h1v1h-1zM79 800h1v1h-1zM1031 622h1v1h-1zM423 840h1v1h-1zM850 702h1v1h-1zM584 810h1v1h-1zM851 700h1v1h-1zM902 622h1v1h-1zM488 812h1v1h-1zM473 841h1v1h-1zM733 677h1v1h-1zM590 688h1v1h-1zM481 753h1v1h-1zM1135 613h1v1h-1zM547 830h1v1h-1zM456 689h1v1h-1zM785 700h1v1h-1zM151 872h1v1h-1zM538 690h1v1h-1zM446 675h1v1h-1zM961 632h1v1h-1zM1018 644h1v1h-1zM1192 668h1v1h-1zM278 831h1v1h-1zM572 688h1v1h-1zM1349 620h1v1h-1zM675 766h1v1h-1zM415 783h1v1h-1zM560 762h1v1h-1zM350 707h1v1h-1zM757 679h1v1h-1zM1107 714h1v1h-1zM831 693h1v1h-1zM179 871h1v1h-1zM497 681h1v1h-1zM823 714h1v1h-1zM464 724h1v1h-1zM369 814h1v1h-1zM445 837h1v1h-1zM1228 632h1v1h-1zM103 853h1v1h-1zM538 775h1v1h-1zM1009 760h1v1h-1zM539 688h1v1h-1zM218 843h1v1h-1zM1027 596h1v1h-1zM282 752h1v1h-1zM578 706h1v1h-1zM926 767h1v1h-1zM834 668h1v1h-1zM651 705h1v1h-1zM64 880h1v1h-1zM450 826h1v1h-1zM884 661h1v1h-1zM213 748h1v1h-1zM179 789h1v1h-1zM443 844h1v1h-1zM636 768h1v1h-1zM912 622h1v1h-1zM1007 694h1v1h-1zM1318 732h1v1h-1zM122 874h1v1h-1zM416 853h1v1h-1zM925 657h1v1h-1zM143 801h1v1h-1zM335 712h1v1h-1zM384 774h1v1h-1zM665 704h1v1h-1zM468 692h1v1h-1zM825 771h1v1h-1zM804 656h1v1h-1zM686 787h1v1h-1zM217 775h1v1h-1zM342 738h1v1h-1zM329 771h1v1h-1zM215 795h1v1h-1zM554 666h1v1h-1zM77 873h1v1h-1zM176 895h1v1h-1zM825 712h1v1h-1zM650 740h1v1h-1zM74 855h1v1h-1zM912 734h1v1h-1zM403 701h1v1h-1zM100 884h1v1h-1zM463 784h1v1h-1zM290 848h1v1h-1zM1067 618h1v1h-1zM1179 652h1v1h-1zM808 776h1v1h-1zM386 783h1v1h-1zM912 743h1v1h-1zM731 662h1v1h-1zM468 680h1v1h-1zM993 683h1v1h-1zM1375 581h1v1h-1zM657 771h1v1h-1zM66 892h1v1h-1zM1127 636h1v1h-1zM958 684h1v1h-1zM521 779h1v1h-1zM285 778h1v1h-1zM825 658h1v1h-1zM178 802h1v1h-1zM1160 717h1v1h-1zM887 721h1v1h-1zM1352 707h1v1h-1zM467 829h1v1h-1zM100 856h1v1h-1zM668 759h1v1h-1zM566 727h1v1h-1zM780 699h1v1h-1zM217 872h1v1h-1zM804 781h1v1h-1zM405 774h1v1h-1zM403 778h1v1h-1zM369 702h1v1h-1zM757 645h1v1h-1zM615 725h1v1h-1zM218 841h1v1h-1zM201 784h1v1h-1zM294 798h1v1h-1zM1111 738h1v1h-1zM140 794h1v1h-1zM83 780h1v1h-1zM468 744h1v1h-1zM290 758h1v1h-1zM1180 653h1v1h-1zM1039 708h1v1h-1zM197 859h1v1h-1zM215 833h1v1h-1zM407 758h1v1h-1zM216 729h1v1h-1zM1146 692h1v1h-1zM455 738h1v1h-1zM258 800h1v1h-1zM1346 644h1v1h-1zM267 860h1v1h-1zM1146 614h1v1h-1zM594 677h1v1h-1zM1206 757h1v1h-1zM889 676h1v1h-1zM355 793h1v1h-1zM122 797h1v1h-1zM695 707h1v1h-1zM541 760h1v1h-1zM514 743h1v1h-1zM1397 602h1v1h-1zM970 653h1v1h-1zM739 734h1v1h-1zM777 807h1v1h-1zM109 870h1v1h-1zM919 679h1v1h-1zM443 831h1v1h-1zM474 801h1v1h-1zM751 694h1v1h-1zM808 636h1v1h-1zM519 839h1v1h-1zM714 679h1v1h-1zM380 704h1v1h-1zM72 823h1v1h-1zM665 695h1v1h-1zM291 751h1v1h-1zM480 765h1v1h-1zM1331 765h1v1h-1zM852 652h1v1h-1zM848 685h1v1h-1zM1110 758h1v1h-1zM154 884h1v1h-1zM436 675h1v1h-1zM285 826h1v1h-1zM358 720h1v1h-1zM878 736h1v1h-1zM329 867h1v1h-1zM876 766h1v1h-1zM1247 603h1v1h-1zM317 852h1v1h-1zM350 824h1v1h-1zM941 735h1v1h-1zM520 734h1v1h-1zM124 791h1v1h-1zM731 679h1v1h-1zM689 804h1v1h-1zM826 633h1v1h-1zM893 675h1v1h-1zM189 742h1v1h-1zM1101 746h1v1h-1zM635 750h1v1h-1zM813 733h1v1h-1zM510 707h1v1h-1zM1112 738h1v1h-1zM1385 630h1v1h-1zM771 653h1v1h-1zM75 857h1v1h-1zM1110 783h1v1h-1zM371 698h1v1h-1zM100 750h1v1h-1zM1600 566h1v1h-1zM1471 561h1v1h-1zM1659 696h1v1h-1zM1429 671h1v1h-1zM1739 622h1v1h-1zM1468 675h1v1h-1zM1525 693h1v1h-1zM1658 546h1v1h-1zM1476 686h1v1h-1zM1603 606h1v1h-1zM1552 644h1v1h-1zM1501 580h1v1h-1zM1495 570h1v1h-1zM1509 587h1v1h-1zM1450 634h1v1h-1zM1700 687h1v1h-1zM1664 678h1v1h-1zM1527 619h1v1h-1zM1442 654h1v1h-1zM1567 636h1v1h-1zM1449 689h1v1h-1zM1673 686h1v1h-1zM1700 709h1v1h-1zM1427 554h1v1h-1zM1421 694h1v1h-1zM1659 552h1v1h-1zM1641 550h1v1h-1zM1718 660h1v1h-1zM1557 540h1v1h-1zM1677 655h1v1h-1zM1584 575h1v1h-1zM1454 538h1v1h-1zM1464 688h1v1h-1zM1578 558h1v1h-1zM1478 654h1v1h-1zM1659 622h1v1h-1zM1534 621h1v1h-1zM1468 572h1v1h-1zM1543 662h1v1h-1zM1477 581h1v1h-1zM1434 624h1v1h-1zM1600 598h1v1h-1zM1643 649h1v1h-1zM1598 655h1v1h-1zM1542 660h1v1h-1zM1523 608h1v1h-1zM1474 602h1v1h-1zM1466 709h1v1h-1zM1617 697h1v1h-1zM1618 600h1v1h-1z" fill="#ffff00" shape-rendering="crispEdges"/>
<text x="1745" y="194" text-anchor="end" font-family='"Liberation Sans", sans-serif' font-size="42.6" fill="#858585" stroke="#858585" stroke-width="0.6" letter-spacing="0.25">Trial version</text>
<polyline points="62.3,241.4 70.3,226.3 79.7,234.3 87.5,220.6 96.4,252.4 104.1,238.7 112.9,234.3 121.8,240.0 130.4,215.5 139.6,252.1 147.0,297.3 155.2,254.4 164.4,246.4 172.8,245.6 181.4,287.6 189.4,270.4 198.5,228.4 206.5,272.1 215.7,262.4 221.4,260.4 232.3,260.4 240.6,267.3 249.5,225.4 259.8,252.7 266.4,267.8 274.7,272.4 283.4,250.3 291.4,255.2 300.2,306.7 308.8,287.8 317.4,260.4 325.4,254.4 334.3,266.3 342.6,260.4 351.2,237.5 359.4,230.4 368.3,229.2 377.5,231.8 385.5,233.5 393.5,236.9 401.5,254.1 411.3,293.6 419.3,261.5 428.4,268.2 436.5,321.6 445.0,300.4 453.6,247.8 462.0,260.6 470.6,272.7 479.2,270.4 487.8,258.4 496.4,280.7 504.4,308.2 513.0,287.5 521.6,257.2 530.1,280.4 538.7,273.2 547.3,272.4 555.9,277.2 564.5,294.6 572.5,270.4 581.1,324.4 589.7,278.6 598.3,284.7 606.3,298.1 614.9,301.5 623.4,292.7 632.0,290.1 640.6,277.8 649.4,271.5 657.4,302.4 666.5,270.3 674.5,344.2 683.4,285.2 691.4,325.3 700.5,287.2 708.5,320.1 717.4,290.4 725.5,344.2 734.3,269.2 743.5,347.0 751.5,270.3 760.6,282.4 768.4,304.3 776.7,295.5 785.6,286.4 793.8,299.5 801.8,305.8 810.8,310.1 819.2,304.7 828.2,359.1 836.4,302.4 844.7,324.4 853.5,296.3 862.0,321.8 870.7,331.5 878.9,326.9 887.5,324.1 896.1,321.2 904.7,328.7 913.3,340.4 921.3,339.3 929.3,319.5 938.5,301.2 947.6,319.5 955.6,340.1 964.2,354.4 972.2,335.5 982.0,343.5 989.4,313.4 998.6,327.2 1006.6,314.3 1015.2,345.8 1023.7,352.1 1032.3,329.2 1040.2,318.7 1048.7,325.8 1057.3,348.1 1066.5,341.8 1074.5,364.3 1083.7,353.8 1092.2,336.4 1101.2,343.5 1109.4,349.2 1117.7,339.5 1126.0,364.7 1134.4,390.4 1143.2,356.7 1151.8,356.3 1160.4,356.3 1168.4,361.2 1177.0,373.3 1185.5,385.3 1194.7,389.9 1202.7,371.6 1211.3,365.5 1219.8,372.9 1228.2,381.3 1234.8,389.3 1240.3,395.1 1245.8,399.1 1253.5,372.2 1262.6,406.5 1270.6,404.2 1279.2,404.2 1287.2,373.3 1295.8,381.3 1304.4,391.4 1313.0,412.8 1321.6,416.6 1330.5,472.3 1338.8,421.4 1347.3,393.4 1355.4,410.2 1364.5,411.1 1372.5,471.2 1381.3,397.4 1389.4,451.7 1398.3,405.4 1406.9,423.7 1415.5,426.6 1423.5,435.7" fill="none" stroke="#3b9cf2" stroke-width="1" stroke-linejoin="miter"/>
</svg>
<div class="t" style="right:1879px;top:137px;text-align:right;">200</div>
<div class="t" style="right:1879px;top:351px;text-align:right;">150</div>
<div class="t" style="right:1879px;top:566px;text-align:right;">100</div>
<div class="t" style="right:1879px;top:780px;text-align:right;">50</div>
<div class="t" style="left:1761px;top:137px;">40</div>
<div class="t" style="left:1761px;top:351px;">30</div>
<div class="t" style="left:1761px;top:566px;">20</div>
<div class="t" style="left:1761px;top:780px;">10</div>
<div class="t" style="left:62px;top:129px;">MB/s</div>
<div class="t" style="left:1741px;top:129px;">ms</div>
<div class="t" style="left:12px;width:100px;top:1007px;text-align:center;">0</div>
<div class="t" style="left:181px;width:100px;top:1007px;text-align:center;">300</div>
<div class="t" style="left:350px;width:100px;top:1007px;text-align:center;">600</div>
<div class="t" style="left:520px;width:100px;top:1007px;text-align:center;">900</div>
<div class="t" style="left:689px;width:100px;top:1007px;text-align:center;">1200</div>
<div class="t" style="left:859px;width:100px;top:1007px;text-align:center;">1500</div>
<div class="t" style="left:1028px;width:100px;top:1007px;text-align:center;">1800</div>
<div class="t" style="left:1197px;width:100px;top:1007px;text-align:center;">2100</div>
<div class="t" style="left:1367px;width:100px;top:1007px;text-align:center;">2400</div>
<div class="t" style="left:1536px;width:100px;top:1007px;text-align:center;">2700</div>
<div class="t" style="left:1706px;width:100px;top:1007px;text-align:center;">3000GB</div>

<!-- right controls -->
<div class="a" style="left:1823px;top:130px;width:73px;height:21px;background:#fdfdfd;border:1px solid #0a74d0;border-radius:4px"></div>
<div class="t" style="left:1823px;top:134px;width:73px;text-align:center">Start</div>
<div class="sep" style="top:155px"></div>
<svg class="a" style="left:1811px;top:159px" width="80" height="17">
 <circle cx="8.5" cy="8.5" r="6.5" fill="#005fb8"/><circle cx="8.5" cy="8.5" r="2.3" fill="#fff"/>
 <circle cx="56.5" cy="8.5" r="6" fill="#fff" stroke="#555" stroke-width="1"/>
</svg>
<div class="t" style="left:1829px;top:161px">Read</div>
<div class="t" style="left:1877px;top:161px">Write</div>
<div class="sep" style="top:183px"></div>
<div class="a" style="left:1814px;top:197px;width:13px;height:13px;border:1px solid #555;border-radius:3px;background:#fdfdfd"></div>
<div class="btn" style="left:1836px;top:195px;width:73px;height:21px"></div>
<div class="t" style="left:1836px;top:199px;width:73px;text-align:center">Set Range</div>
<div class="chk" style="left:1810px;top:223px"><svg width="13" height="13" style="position:absolute;left:0;top:0"><path d="M3 6.5 L5.5 9 L10 4" fill="none" stroke="#fff" stroke-width="1"/></svg></div>
<div class="t" style="left:1826px;top:223px">Transfer Rate</div>
<div class="t" style="left:1810px;top:245px">Minimum</div>
<div class="vbox" style="top:261px">120.7 MB/s</div>
<div class="t" style="left:1810px;top:282px;letter-spacing:-0.45px">Maximum</div>
<div class="vbox" style="top:298px">179.2 MB/s</div>
<div class="t" style="left:1810px;top:321px">Average</div>
<div class="vbox" style="top:336px">156.9 MB/s</div>
<div class="sep" style="top:362px"></div>
<div class="chk" style="left:1810px;top:369px"><svg width="13" height="13" style="position:absolute;left:0;top:0"><path d="M3 6.5 L5.5 9 L10 4" fill="none" stroke="#fff" stroke-width="1"/></svg></div>
<div class="t" style="left:1826px;top:369px;letter-spacing:-0.4px">Access Time</div>
<div class="vbox" style="top:393px">12.3 ms</div>
<div class="chk" style="left:1808px;top:416px"><svg width="13" height="13" style="position:absolute;left:0;top:0"><path d="M3 6.5 L5.5 9 L10 4" fill="none" stroke="#fff" stroke-width="1"/></svg></div>
<div class="t" style="left:1824px;top:416px">Burst Rate</div>
<div class="vbox" style="top:437px">283.2 MB/s</div>
<div class="sep" style="top:461px"></div>
<div class="t" style="left:1816px;top:469px;letter-spacing:-0.5px">CPU Usage</div>
<div class="vbox" style="top:490px">0.1%</div>

</body></html>
